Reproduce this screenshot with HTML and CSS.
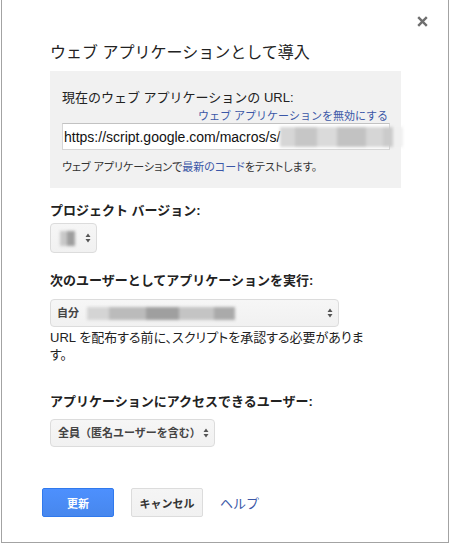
FILE: index.html
```html
<!DOCTYPE html>
<html lang="ja">
<head>
<meta charset="utf-8">
<title>ウェブ アプリケーションとして導入</title>
<link rel="stylesheet" href="styles.css">
</head>
<body>
<div class="dialog">
  <button class="close" aria-label="閉じる">
    <svg width="11" height="11" viewBox="0 0 11 11"><path d="M1.2 1.2 L9.8 9.8 M9.8 1.2 L1.2 9.8" stroke="#6f6f6f" stroke-width="2.4" fill="none"/></svg>
  </button>
  <div class="content">
    <h1 class="title">ウェブ アプリケーションとして導入</h1>
    <div class="urlbox">
      <div class="urllabel">現在のウェブ アプリケーションの URL:</div>
      <div class="disable"><a class="link">ウェブ アプリケーションを無効にする</a></div>
      <div class="urlinput"><span class="urltext">https://script.google.com/macros/s/</span><span class="blur blur-url"></span></div>
      <div class="testline">ウェブ アプリケーションで<a class="link">最新のコード</a>をテストします。</div>
    </div>

    <div class="label label-first">プロジェクト バージョン:</div>
    <div class="select select-version"><span class="blur blur-ver"></span><span class="arrows"><svg width="6" height="12" viewBox="0 0 6 12"><path d="M0.5 5 L3 1.5 L5.5 5 Z M0.5 7 L3 10.5 L5.5 7 Z" fill="#555"/></svg></span></div>

    <div class="label label-gap">次のユーザーとしてアプリケーションを実行:</div>
    <div class="select select-user"><span class="seltext">自分</span><span class="blur blur-user"></span><span class="spacer"></span><span class="arrows"><svg width="6" height="12" viewBox="0 0 6 12"><path d="M0.5 5 L3 1.5 L5.5 5 Z M0.5 7 L3 10.5 L5.5 7 Z" fill="#555"/></svg></span></div>
    <p class="note">URL を配布する前に、スクリプトを承認する必要があります。</p>

    <div class="label label-third">アプリケーションにアクセスできるユーザー:</div>
    <div class="select select-access"><span class="seltext">全員（匿名ユーザーを含む）</span><span class="arrows"><svg width="6" height="12" viewBox="0 0 6 12"><path d="M0.5 5 L3 1.5 L5.5 5 Z M0.5 7 L3 10.5 L5.5 7 Z" fill="#555"/></svg></span></div>
  </div>
  <div class="buttons">
    <button class="btn btn-primary">更新</button>
    <button class="btn btn-default">キャンセル</button>
    <a class="help">ヘルプ</a>
  </div>
</div>
</body>
</html>
```

FILE: styles.css
```css
* { box-sizing: border-box; }
html, body { margin: 0; padding: 0; background: #fff; }
body {
  font-family: "Liberation Sans", "Noto Sans CJK JP", sans-serif;
  color: #222;
  font-size: 13px;
}
.dialog {
  position: relative;
  margin-left: 1px;
  width: 448px;
  height: 543px;
  border: 1px solid #a3a3a3;
  border-top: none;
  background: #fff;
  padding-top: 43px;
}
.close {
  position: absolute;
  top: 16px;
  left: 415px;
  width: 11px;
  height: 11px;
  padding: 0;
  border: none;
  background: none;
  line-height: 0;
}
.content {
  margin-left: 48px;
  width: 351px;
}
.title {
  margin: 0 0 8px 0;
  font-size: 16px;
  line-height: 20px;
  font-weight: normal;
  color: #222;
}
.urlbox {
  background: #f1f1f1;
  height: 117px;
  padding: 19px 11px 0 12px;
}
.urllabel {
  font-size: 13px;
  line-height: 16px;
}
.link { color: #3b57a7; text-decoration: none; }
.disable {
  margin-top: 3px;
  text-align: right;
  font-size: 11px;
  line-height: 14px;
  padding-right: 2px;
}
.urlinput {
  position: relative;
  display: flex;
  align-items: center;
  height: 27px;
  background: #fff;
  border: 1px solid #d6d6d6;
  border-top-color: #c2c2c2;
  padding-left: 1px;
  font-size: 14px;
  white-space: nowrap;
}
.urltext { color: #111; }
.blur {
  display: inline-block;
  filter: blur(1.6px);
}
.blur-url {
  width: 138px;
  height: 20px;
  margin-right: -14px;
  background: linear-gradient(90deg, #d6d6d6 0 12%, #c6c6c6 12% 30%, #dadada 30% 46%, #c2c2c2 46% 70%, #d6d6d6 70% 84%, #cbcbcb 84% 92%, #f0f0f0 92%);
}
.testline {
  margin-top: 10px;
  font-size: 11px;
  line-height: 14px;
  color: #333;
  font-feature-settings: "palt";
}
.label {
  font-weight: bold;
  font-size: 13px;
  line-height: 16px;
  color: #222;
}
.label-first { margin-top: 15px; }
.label-gap { margin-top: 20px; }
.label-third { margin-top: 31px; }
.select {
  display: inline-flex;
  align-items: center;
  border: 1px solid #dcdcdc;
  border-radius: 4px;
  background: linear-gradient(#f6f6f6, #f1f1f1);
  font-size: 11px;
  font-weight: bold;
  color: #444;
  padding: 0 5px 0 7px;
  white-space: nowrap;
}
.select-version {
  margin-top: 4px;
  width: 47px;
  height: 30px;
  gap: 10px;
  padding-left: 9px;
}
.blur-ver {
  width: 19px;
  height: 15px;
  background: linear-gradient(90deg, #c8c8c8 0 50%, #9e9e9e 50% 100%);
}
.select-user {
  display: flex;
  margin-top: 10px;
  width: 289px;
  height: 28px;
  padding-left: 6px;
}
.seltext { line-height: 14px; }
.blur-user {
  margin-left: 8px;
  width: 148px;
  height: 13px;
  background: linear-gradient(90deg, #d4d4d4 0 15%, #bbb 15% 40%, #9f9f9f 40% 62%, #c4c4c4 62% 86%, #aaa 86%);
}
.spacer { flex: 1; }
.arrows { display: inline-flex; line-height: 0; }
.note {
  margin: 2px 0 0 0;
  width: 317px;
  font-size: 13px;
  line-height: 17px;
  color: #222;
  font-feature-settings: "palt";
}
.select-access {
  margin-top: 9px;
  height: 28px;
  gap: 2px;
}
.buttons {
  display: flex;
  align-items: center;
  margin-top: 41px;
  margin-left: 40px;
  gap: 17px;
}
.btn {
  height: 29px;
  border-radius: 2px;
  font-family: "Liberation Sans", "Noto Sans CJK JP", sans-serif;
  font-size: 11px;
  font-weight: bold;
  padding: 0;
}
.btn-primary {
  width: 72px;
  background: linear-gradient(#4d90fe, #4787ed);
  border: 1px solid #3079ed;
  color: #fff;
}
.btn-default {
  width: 72px;
  background: linear-gradient(#f5f5f5, #f1f1f1);
  border: 1px solid #dcdcdc;
  color: #333;
}
.help {
  font-size: 13px;
  color: #3b57a7;
  margin-left: 0;
}
```
